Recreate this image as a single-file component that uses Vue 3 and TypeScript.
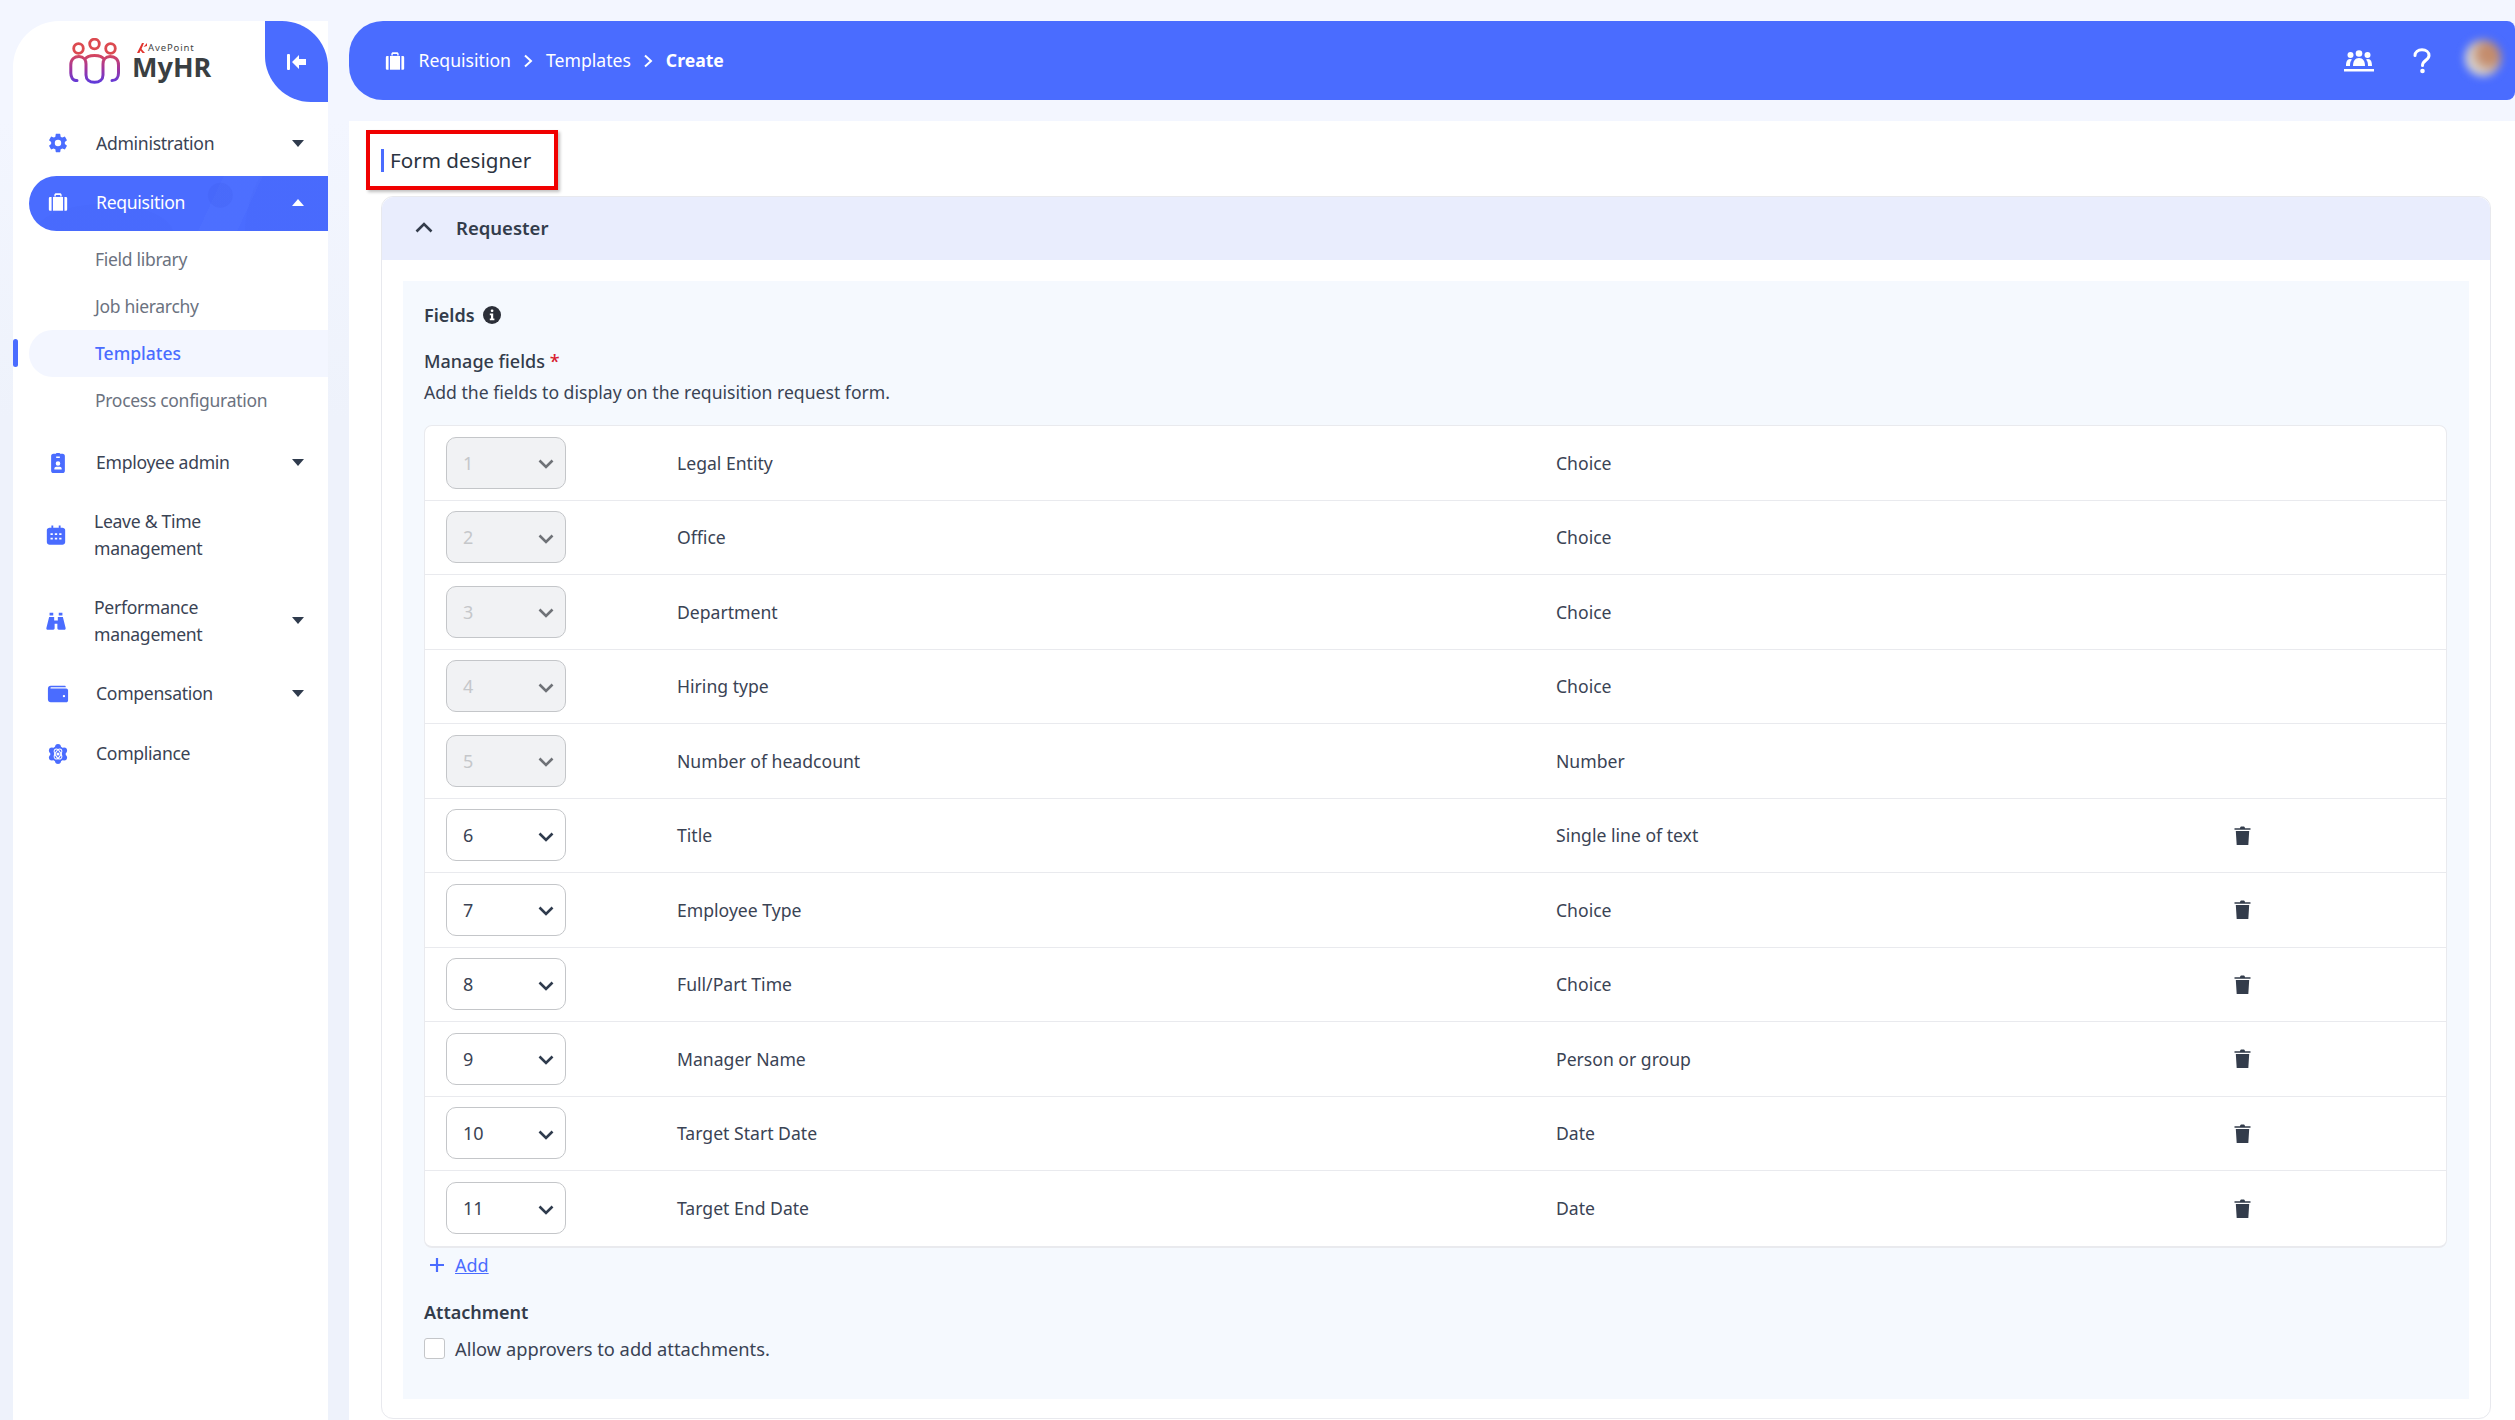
<template>
  <div class="page">
    <aside class="sidebar">
      <div class="brand">
        <div class="logo">
          <svg class="logo-mark" viewBox="0 0 52 46" width="52" height="46">
            <defs>
              <linearGradient id="logoGrad" gradientUnits="userSpaceOnUse" x1="0" y1="16" x2="0" y2="46">
                <stop offset="0" stop-color="#d8475a" />
                <stop offset="0.5" stop-color="#a0359f" />
                <stop offset="1" stop-color="#5a3be0" />
              </linearGradient>
            </defs>
            <circle cx="9.500" cy="10.500" r="4.800" fill="none" stroke="#dc4a50" stroke-width="2.800" />
            <circle cx="25.500" cy="6" r="4.800" fill="none" stroke="#dc4a50" stroke-width="2.800" />
            <circle cx="41.500" cy="10.500" r="4.800" fill="none" stroke="#dc4a50" stroke-width="2.800" />
            <path d="M8 42.500C3.500 42.500 1.800 39 1.800 35V27C1.800 21 5.500 18.500 10 18.500C14.500 18.500 17 22 17 26V37C17 41.500 20.500 44.300 25.500 44.300C30.500 44.300 34 41.500 34 37V26C34 22 36.500 18.500 41 18.500C45.500 18.500 49.500 21 49.500 27V35C49.500 39 47.500 42.500 43 42.500M16 21.500C18.500 16 32.500 16 35 21.500" fill="none" stroke="url(#logoGrad)" stroke-width="3" stroke-linecap="round" />
          </svg>
          <div class="logo-text">
            <div class="avepoint">
              <svg viewBox="0 0 10 10" width="10" height="10"><path d="M0 10L5 0h2L4.500 6 8 10H5.500L3.500 7.500 2.500 10zM6.500 4L10 0v3z" fill="#e2352f" /></svg>
              <span>AvePoint</span>
            </div>
            <div class="myhr">MyHR</div>
          </div>
        </div>
        <div class="collapse-btn">
          <svg viewBox="0 0 20 18" width="20" height="18" fill="#fff">
            <rect x="0" y="1" width="3" height="16" rx="1" />
            <path d="M5 9l7-7v4h7v6h-7v4z" />
          </svg>
        </div>
      </div>

      <nav class="menu">
        <template v-for="item in menu" :key="item.label">
          <div :class="['menu-item', { active: item.active, double: item.lines }]">
            <svg class="menu-icon" viewBox="0 0 24 24" width="22" height="22">
              <path v-if="item.icon === 'gear'" :d="gearPath" />
              <g v-else-if="item.icon === 'case'">
                <path d="M8 6V4.500C8 3 9 2.500 10 2.500h4c1 0 2 .5 2 2V6h-1.600V4.300H9.600V6z" />
                <path d="M3 6.500h2v15H3.500C2.300 21.500 2 20.500 2 19.500V8.500C2 7.500 2.300 6.500 3 6.500z" />
                <rect x="6.500" y="6.500" width="11" height="15" />
                <path d="M19 6.500h2c.7 0 1 1 1 2v11c0 1-.3 2-1.500 2H19z" />
              </g>
              <path v-else-if="item.icon === 'badge'" d="M7 2h3V1h4v1h3c1.500 0 2.500 1 2.500 2.500v16c0 1.500-1 2.500-2.500 2.500H7c-1.500 0-2.500-1-2.500-2.500v-16C4.500 3 5.500 2 7 2zm3 3v1.500h4V5zm2 5a2.500 2.500 0 1 0 0 5 2.500 2.500 0 0 0 0-5zm-4 9h8v-1c0-1-1-2-2-2h-4c-1 0-2 1-2 2z" fill-rule="evenodd" />
              <path v-else-if="item.icon === 'calendar'" d="M7 1.500h2V4h6V1.500h2V4h2c1.500 0 3 1 3 2.500V20c0 1.500-1.500 2.500-3 2.500H5C3.500 22.500 2 21.500 2 20V6.500C2 5 3.500 4 5 4h2zM6 10v2h2.500v-2zm4.700 0v2h2.600v-2zm4.800 0v2H18v-2zM6 15v2h2.500v-2zm4.700 0v2h2.600v-2zm4.800 0v2H18v-2z" fill-rule="evenodd" />
              <path v-else-if="item.icon === 'binoculars'" d="M5 3h4v3H5zM15 3h4v3h-4zM4.500 7.500h5.500v4h4v-4h5.500l3 12c.2 1-.3 2-1.500 2h-6c-1 0-1.500-.8-1.500-1.500V15h-3v5c0 .7-.5 1.500-1.500 1.500H3c-1.200 0-1.700-1-1.500-2z" />
              <path v-else-if="item.icon === 'wallet'" d="M4 3h15c1 0 1.500.5 1.500 1.500H4.500C3.500 4.500 3.500 6 4.500 6H21c1 0 2 1 2 2v11c0 1.200-1 2-2 2H4c-1.700 0-3-1.300-3-3V6c0-1.700 1.300-3 3-3zm14.500 10a1.300 1.300 0 1 0 0 2.600 1.300 1.300 0 0 0 0-2.600z" fill-rule="evenodd" />
              <g v-else>
                <circle cx="12" cy="12" r="8.500" />
                <circle cx="12" cy="4.200" r="3.200" />
                <circle cx="12" cy="19.800" r="3.200" />
                <circle cx="5.300" cy="8.100" r="3.200" />
                <circle cx="18.700" cy="8.100" r="3.200" />
                <circle cx="5.300" cy="15.900" r="3.200" />
                <circle cx="18.700" cy="15.900" r="3.200" />
                <ellipse cx="12" cy="12" rx="6" ry="3" fill="none" stroke="#fff" stroke-width="1.100" transform="rotate(60 12 12)" />
                <ellipse cx="12" cy="12" rx="6" ry="3" fill="none" stroke="#fff" stroke-width="1.100" transform="rotate(-60 12 12)" />
                <circle cx="12" cy="12" r="1.700" fill="#fff" />
              </g>
            </svg>
            <span class="menu-label">
              <span v-for="line in item.label.split('|')" :key="line" class="menu-line">{{ line }}</span>
            </span>
            <span v-if="item.caret" :class="['caret', { up: item.active }]"></span>
          </div>
          <div v-if="item.active" class="submenu">
            <div
              v-for="sub in subItems"
              :key="sub"
              :class="['sub-item', { current: sub === 'Templates' }]"
            >
              {{ sub }}
            </div>
          </div>
        </template>
      </nav>
    </aside>

    <div class="content">
      <header class="topbar">
        <div class="crumbs">
          <svg class="crumb-icon" viewBox="0 0 24 24" width="22" height="22" fill="#fff">
            <path d="M8 6V4.500C8 3 9 2.500 10 2.500h4c1 0 2 .5 2 2V6h-1.600V4.300H9.600V6z" />
            <path d="M3 6.500h2v15H3.500C2.300 21.500 2 20.500 2 19.500V8.500C2 7.500 2.300 6.500 3 6.500z" />
            <rect x="6.500" y="6.500" width="11" height="15" />
            <path d="M19 6.500h2c.7 0 1 1 1 2v11c0 1-.3 2-1.500 2H19z" />
          </svg>
          <span>Requisition</span>
          <svg class="crumb-sep" viewBox="0 0 10 14" width="10" height="14"><path d="M2 1.500L8 7l-6 5.500" /></svg>
          <span>Templates</span>
          <svg class="crumb-sep" viewBox="0 0 10 14" width="10" height="14"><path d="M2 1.500L8 7l-6 5.500" /></svg>
          <strong>Create</strong>
        </div>
        <div class="top-actions">
          <svg viewBox="0 0 30 22" width="30" height="22" fill="#fff">
            <circle cx="6.500" cy="5" r="3" />
            <circle cx="15" cy="3.500" r="3.300" />
            <circle cx="23.500" cy="5" r="3" />
            <path d="M2 16c0-4 1-7 4-7 1 0 1.500.2 2 .6C6.500 11 6 13 6 16zM9 16c0-5 2-8 6-8s6 3 6 8zM24 16c0-3-.5-5-2-6.400.5-.4 1-.6 2-.6 3 0 4 3 4 7z" />
            <rect x="0" y="19" width="30" height="2.500" />
          </svg>
          <svg class="help" viewBox="0 0 18 26" width="18" height="26">
            <path d="M2 7.500C2 4 5 1.800 9 1.800c4 0 7 2.200 7 5.700 0 4.800-6.500 4.800-6.500 10" />
            <circle cx="9.500" cy="23" r="2.300" />
          </svg>
          <div class="avatar"></div>
        </div>
      </header>

      <main class="main">
        <div class="title-row">
          <h1 class="title">Form designer</h1>
          <div class="annotation"></div>
        </div>

        <section class="panel">
          <div class="panel-head">
            <svg viewBox="0 0 18 11" width="18" height="11"><path d="M1.500 9.500L9 2l7.500 7.500" /></svg>
            <span>Requester</span>
          </div>
          <div class="panel-body">
            <div class="fields">
              <div class="fields-label">
                Fields
                <svg viewBox="0 0 18 18" width="18" height="18">
                  <circle cx="9" cy="9" r="9" fill="#2b2f38" />
                  <rect x="7.800" y="3.500" width="2.600" height="2.600" rx="1" fill="#fff" />
                  <path d="M6.800 7.500h3.400v5h1.200v1.800H6.800v-1.800H8V9.300H6.800z" fill="#fff" />
                </svg>
              </div>
              <div class="manage-label">Manage fields <span class="req">*</span></div>
              <div class="manage-desc">Add the fields to display on the requisition request form.</div>

              <div class="field-table">
                <div v-for="(row, i) in rows" :key="row.name" class="field-row">
                  <div :class="['order-select', { disabled: i < 5 }]">
                    <span>{{ i + 1 }}</span>
                    <svg viewBox="0 0 16 10" width="16" height="10"><path d="M1.500 1.500L8 8l6.500-6.500" /></svg>
                  </div>
                  <div>{{ row.name }}</div>
                  <div>{{ row.type }}</div>
                  <svg v-if="i >= 5" class="trash" viewBox="0 0 17 19" width="17" height="19">
                    <path d="M6 2.200C6 1 6.800.5 7.500.5h2c.7 0 1.500.5 1.500 1.700h5.500v1.500H.5V2.200z" />
                    <path d="M1.800 5h13.400l-.9 14H2.700z" />
                  </svg>
                </div>
              </div>

              <div class="add-row">
                <svg viewBox="0 0 16 16" width="16" height="16"><path d="M8 1v14M1 8h14" /></svg>
                <a class="add-link">Add</a>
              </div>

              <div class="attach-label">Attachment</div>
              <label class="attach-check">
                <span class="checkbox"></span>
                Allow approvers to add attachments.
              </label>
            </div>
          </div>
        </section>
      </main>
    </div>
  </div>
</template>

<script setup lang="ts">
interface MenuItem {
  label: string
  icon: string
  caret?: boolean
  active?: boolean
  lines?: boolean
}

const gearPath =
  'M12 15.5A3.5 3.5 0 0 1 8.5 12 3.5 3.5 0 0 1 12 8.5a3.5 3.5 0 0 1 3.5 3.5 3.5 3.5 0 0 1-3.5 3.5m7.43-2.53c.04-.32.07-.64.07-.97 0-.33-.03-.66-.07-1l2.11-1.63c.19-.15.24-.42.12-.64l-2-3.46c-.12-.22-.39-.31-.61-.22l-2.49 1c-.52-.39-1.06-.73-1.69-.98l-.37-2.65A.506.506 0 0 0 14 2h-4c-.25 0-.46.18-.5.42l-.37 2.65c-.63.25-1.17.59-1.69.98l-2.49-1c-.22-.09-.49 0-.61.22l-2 3.46c-.13.22-.07.49.12.64L4.57 11c-.04.34-.07.67-.07 1 0 .33.03.65.07.97l-2.11 1.66c-.19.15-.25.42-.12.64l2 3.46c.12.22.39.3.61.22l2.49-1.01c.52.4 1.06.74 1.69.99l.37 2.65c.04.24.25.42.5.42h4c.25 0 .46-.18.5-.42l.37-2.65c.63-.26 1.17-.59 1.69-.99l2.49 1.01c.22.08.49 0 .61-.22l2-3.46c.12-.22.07-.49-.12-.64l-2.11-1.66z'

const menu: MenuItem[] = [
  { label: 'Administration', icon: 'gear', caret: true },
  { label: 'Requisition', icon: 'case', caret: true, active: true },
  { label: 'Employee admin', icon: 'badge', caret: true },
  { label: 'Leave & Time|management', icon: 'calendar', lines: true },
  { label: 'Performance|management', icon: 'binoculars', caret: true, lines: true },
  { label: 'Compensation', icon: 'wallet', caret: true },
  { label: 'Compliance', icon: 'atom' }
]

const subItems = ['Field library', 'Job hierarchy', 'Templates', 'Process configuration']

const rows = [
  { name: 'Legal Entity', type: 'Choice' },
  { name: 'Office', type: 'Choice' },
  { name: 'Department', type: 'Choice' },
  { name: 'Hiring type', type: 'Choice' },
  { name: 'Number of headcount', type: 'Number' },
  { name: 'Title', type: 'Single line of text' },
  { name: 'Employee Type', type: 'Choice' },
  { name: 'Full/Part Time', type: 'Choice' },
  { name: 'Manager Name', type: 'Person or group' },
  { name: 'Target Start Date', type: 'Date' },
  { name: 'Target End Date', type: 'Date' }
]
</script>

<style>
html,
body {
  margin: 0;
  overflow: hidden;
  background: #f3f6ff;
}
</style>

<style scoped>
.page {
  display: flex;
  width: 2515px;
  height: 1420px;
  overflow: hidden;
  font-family: "Noto Sans", "Open Sans", sans-serif;
  font-size: 17.600px;
  color: #3a4354;
  background: linear-gradient(#f3f6ff 0, #f3f6ff 120px, #eef2fb 420px);
}

/* sidebar */
.sidebar {
  flex: none;
  width: 315px;
  margin: 21px 0 0 13px;
  background: #fff;
  border-top-left-radius: 46px;
}
.brand {
  display: flex;
  justify-content: space-between;
  height: 94.500px;
}
.logo {
  display: flex;
  align-items: flex-start;
  gap: 11px;
  padding: 17px 0 0 56px;
}
.logo-mark {
  flex: none;
}
.logo-text {
  line-height: 1;
}
.avepoint {
  display: flex;
  align-items: center;
  gap: 1px;
  height: 10px;
  margin: 5px 0 0 5px;
  font-size: 9.500px;
  line-height: 10px;
  letter-spacing: 0.9px;
  color: #444;
}
.myhr {
  font-size: 27px;
  font-weight: 700;
  color: #3a3f42;
}
.collapse-btn {
  display: flex;
  align-items: center;
  justify-content: center;
  width: 63px;
  height: 81px;
  background: #4a6cff;
  border-radius: 0 46px 0 46px;
}
.menu {
  display: flex;
  flex-direction: column;
  gap: 5px;
  margin-left: 16px;
}
.menu-item {
  display: flex;
  align-items: center;
  height: 55px;
  padding: 0 24px 0 18px;
  color: #3a4354;
}
.menu-item.double {
  height: 80.500px;
  padding-left: 16px;
}
.menu-item.active {
  box-sizing: border-box;
  padding-bottom: 2px;
  color: #fff;
  background:
    radial-gradient(circle at 64% 35%, rgba(60, 90, 235, 0.22) 0 12px, transparent 13px),
    radial-gradient(ellipse 60px 90px at 92% 110%, rgba(60, 90, 235, 0.1) 0 98%, transparent 100%),
    radial-gradient(ellipse 70px 30px at 25% 105%, rgba(60, 90, 235, 0.1) 0 98%, transparent 100%),
    linear-gradient(115deg, transparent 60%, rgba(90, 125, 255, 0.18) 60% 72%, transparent 72%),
    #4a6cff;
  border-radius: 28px 0 0 28px;
}
.menu-icon {
  flex: none;
  fill: #4a6cff;
}
.menu-item.active .menu-icon {
  fill: #fff;
}
.menu-label {
  display: flex;
  flex-direction: column;
  flex: 1;
  margin-left: 27px;
  line-height: 27px;
  letter-spacing: -0.3px;
}
.menu-line {
  white-space: nowrap;
}
.caret {
  flex: none;
  width: 0;
  height: 0;
  border-left: 6px solid transparent;
  border-right: 6px solid transparent;
  border-top: 7px solid #2f3b4d;
}
.caret.up {
  border-top: 0;
  border-bottom: 7px solid #fff;
}
.submenu {
  display: flex;
  flex-direction: column;
  margin-bottom: 6.500px;
}
.sub-item {
  position: relative;
  height: 47px;
  padding-left: 66px;
  line-height: 47px;
  font-size: 17.500px;
  letter-spacing: -0.3px;
  color: #6b7280;
}
.sub-item.current {
  font-weight: 500;
  letter-spacing: 0;
  color: #4a6cff;
  background: #f3f6ff;
  border-radius: 24px 0 0 24px;
}
.sub-item.current::before {
  content: "";
  position: absolute;
  left: -16px;
  top: 9px;
  width: 5px;
  height: 28px;
  border-radius: 3px;
  background: #4a6cff;
}

/* top bar + main */
.content {
  flex: 1;
  display: flex;
  flex-direction: column;
  min-width: 0;
  margin-left: 21px;
  padding-top: 21px;
}
.topbar {
  flex: none;
  display: flex;
  align-items: center;
  justify-content: space-between;
  height: 79px;
  padding: 0 14px 0 35px;
  color: #fff;
  background: #4a6cff;
  border-radius: 34px 8px 8px 34px;
}
.crumbs {
  display: flex;
  align-items: center;
  gap: 12.500px;
  line-height: 1;
}
.crumb-icon {
  margin-right: 0;
}
.crumb-sep {
  fill: none;
  stroke: #fff;
  stroke-width: 2;
}
.crumbs strong {
  font-weight: 700;
}
.top-actions {
  display: flex;
  align-items: center;
  gap: 39px;
}
.help {
  fill: #fff;
}
.help path {
  fill: none;
  stroke: #fff;
  stroke-width: 3;
  stroke-linecap: round;
}
.avatar {
  width: 36px;
  height: 36px;
  margin: 0 0 6px -5px;
  border-radius: 50%;
  background:
    radial-gradient(circle at 68% 38%, #c48c6c 0 28%, transparent 62%),
    #dad6d2;
  filter: blur(4px);
}
.main {
  flex: 1;
  margin-top: 21px;
  padding: 0 24px 0 32px;
  background: #fff;
}
.title-row {
  position: relative;
  display: flex;
  align-items: center;
  box-sizing: border-box;
  height: 75px;
  padding-top: 3px;
}
.title {
  margin: 0;
  padding-left: 6px;
  font-size: 20.600px;
  font-weight: 400;
  line-height: 23px;
  color: #2b3341;
  border-left: 3px solid #4a6cff;
}
.annotation {
  position: absolute;
  left: -15px;
  top: 9px;
  width: 192px;
  height: 60px;
  box-sizing: border-box;
  border: 4px solid #f00000;
  box-shadow: 2px 2px 3px rgba(0, 0, 0, 0.25);
}

/* panel */
.panel {
  box-sizing: border-box;
  height: 1223px;
  border: 1px solid #e8e9ee;
  border-radius: 12px;
}
.panel-head {
  display: flex;
  align-items: center;
  gap: 23px;
  box-sizing: border-box;
  height: 63px;
  padding: 0 0 2px 33px;
  font-size: 18.500px;
  font-weight: 600;
  color: #333c4b;
  background: #e9edfd;
  border-radius: 12px 12px 0 0;
}
.panel-head svg {
  fill: none;
  stroke: #333c4b;
  stroke-width: 2.600;
}
.panel-body {
  padding: 21px;
}
.fields {
  padding: 20px 22px 36px 21px;
  font-size: 18px;
  background: #f5f9fe;
}
.fields-label {
  display: flex;
  align-items: center;
  gap: 8px;
  line-height: 28px;
  font-weight: 600;
  color: #333c4b;
}
.manage-label {
  margin-top: 18px;
  line-height: 28px;
  font-weight: 500;
  color: #333c4b;
}
.req {
  color: #d8202f;
}
.manage-desc {
  margin-top: 1px;
  line-height: 32px;
  font-size: 17.600px;
}
.field-table {
  margin-top: 17px;
  font-size: 17.600px;
  background: #fff;
  border: 1px solid #e9eaee;
  border-bottom-width: 2px;
  border-radius: 8px;
}
.field-row {
  display: grid;
  grid-template-columns: 231px 879px 678px auto;
  align-items: center;
  box-sizing: border-box;
  height: 74.500px;
  padding-left: 21px;
  border-bottom: 1px solid #e9eaee;
}
.field-row:last-child {
  border-bottom: 0;
}
.order-select {
  display: flex;
  align-items: center;
  justify-content: space-between;
  box-sizing: border-box;
  width: 120px;
  height: 52px;
  padding: 0 11px 0 16px;
  font-size: 18px;
  background: #fff;
  border: 1px solid #c4c6c9;
  border-radius: 10px;
}
.order-select svg {
  margin-top: 3px;
  fill: none;
  stroke: #2f3b4d;
  stroke-width: 2.600;
}
.order-select.disabled {
  color: #c5c7ca;
  background: #f1f2f4;
}
.order-select.disabled svg {
  stroke: #6f7277;
}
.trash {
  fill: #333c4b;
}
.add-row {
  display: flex;
  align-items: center;
  gap: 10px;
  height: 26px;
  margin-top: 4px;
  padding-left: 5px;
}
.add-row svg {
  fill: none;
  stroke: #4a6cff;
  stroke-width: 2.200;
}
.add-link {
  color: #4a6cff;
  text-decoration: underline;
}
.attach-label {
  margin-top: 20px;
  line-height: 28px;
  font-weight: 600;
  color: #333c4b;
}
.attach-check {
  display: flex;
  align-items: center;
  gap: 10px;
  height: 28px;
  margin-top: 9px;
  font-size: 18.300px;
}
.checkbox {
  flex: none;
  box-sizing: border-box;
  width: 21px;
  height: 21px;
  background: #fff;
  border: 1px solid #c4c6c9;
  border-radius: 3px;
}
</style>
